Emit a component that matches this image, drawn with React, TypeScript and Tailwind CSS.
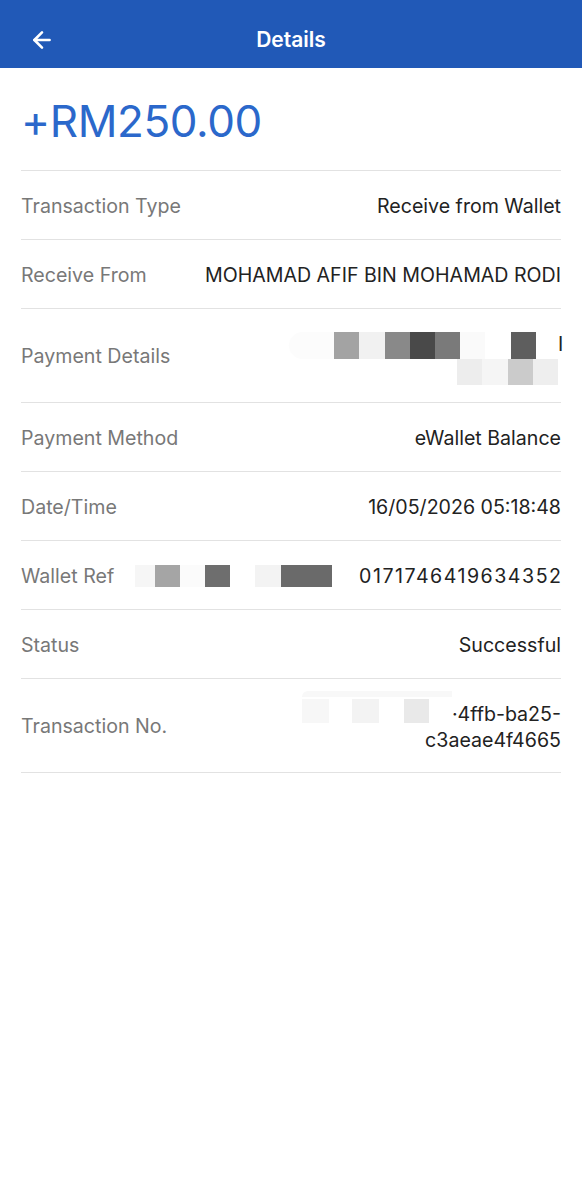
import { ArrowLeft } from 'lucide-react';

type Block = { w: number; c: string };

// pixelated (censored) strip drawn as plain blocks
function Pixels({ blocks, h }: { blocks: Block[]; h: number }) {
  return (
    <div className="flex" style={{ height: h }}>
      {blocks.map((b, i) => (
        <div key={i} style={{ width: b.w, backgroundColor: b.c }} />
      ))}
    </div>
  );
}

function Row({ label, children, tall }: { label: string; children: React.ReactNode; tall?: boolean }) {
  return (
    <div
      className={`flex items-center justify-between border-b border-[#e2e2e2] pt-[3px] ${tall ? 'h-[94px]' : 'h-[69px]'}`}
    >
      <span className="text-[19.6px] text-[#787878] whitespace-nowrap">{label}</span>
      <div className="text-[19.6px] text-[#222222] text-right whitespace-nowrap">{children}</div>
    </div>
  );
}

export default function App() {
  return (
    <div
      className="min-h-[1200px] w-[582px] bg-white"
      style={{ fontFamily: 'Inter, "Noto Sans", sans-serif' }}
    >
      {/* header */}
      <div className="relative flex h-[68px] items-center justify-center bg-[#2159b7] pt-[12px]">
        <ArrowLeft className="absolute left-[29px] top-[27px] h-[26px] w-[26px] text-white" strokeWidth={2.4} />
        <h1 className="text-[21px] font-semibold text-white">Details</h1>
      </div>

      <div className="px-[21px]">
        <div className="flex h-[103px] items-center border-b border-[#e2e2e2] pt-[4px]">
          <span className="text-[44px] leading-none text-[#2b68cb] tracking-[-0.4px]">+RM250.00</span>
        </div>

        <Row label="Transaction Type">Receive from Wallet</Row>
        <Row label="Receive From">MOHAMAD AFIF BIN MOHAMAD RODI</Row>
        <Row label="Payment Details" tall>
          <div className="flex flex-col items-end pt-[2px]">
            <div className="flex items-center">
              <div className="h-[27px] w-[45px] rounded-l-full bg-[#fcfcfc]" />
              <Pixels
                h={27}
                blocks={[
                  { w: 25, c: '#a3a3a3' },
                  { w: 26, c: '#f1f1f1' },
                  { w: 25, c: '#898989' },
                  { w: 25, c: '#494949' },
                  { w: 25, c: '#7a7a7a' },
                  { w: 25, c: '#fafafa' },
                  { w: 26, c: '#ffffff' },
                  { w: 25, c: '#5e5e5e' },
                  { w: 22, c: '#ffffff' },
                ]}
              />
              <span className="w-[3px] leading-none">I</span>
            </div>
            <Pixels
              h={26}
              blocks={[
                { w: 25, c: '#ededed' },
                { w: 26, c: '#f5f5f5' },
                { w: 25, c: '#cbcbcb' },
                { w: 25, c: '#eeeeee' },
                { w: 3, c: '#ffffff' },
              ]}
            />
          </div>
        </Row>
        <Row label="Payment Method">eWallet Balance</Row>
        <Row label="Date/Time">16/05/2026 05:18:48</Row>
        <Row label="Wallet Ref">
          <div className="flex items-center">
            <Pixels
              h={22}
              blocks={[
                { w: 20, c: '#f6f6f6' },
                { w: 25, c: '#a5a5a5' },
                { w: 25, c: '#fbfbfb' },
                { w: 25, c: '#6e6e6e' },
                { w: 25, c: '#ffffff' },
                { w: 26, c: '#f3f3f3' },
                { w: 51, c: '#6a6a6a' },
                { w: 27, c: '#ffffff' },
              ]}
            />
            <span className="tracking-[1.5px] -mr-[1.5px]">0171746419634352</span>
          </div>
        </Row>
        <Row label="Status">Successful</Row>
        <Row label="Transaction No." tall>
          <div className="flex flex-col items-end leading-[26px]">
            <div className="flex items-center">
              <div className="-mt-[14px] flex flex-col items-start">
                <div className="mb-[2px] h-[6px] w-[150px] rounded-tl-full bg-[#f8f8f8]" />
                <Pixels
                  h={24}
                  blocks={[
                    { w: 27, c: '#f7f7f7' },
                    { w: 23, c: '#ffffff' },
                    { w: 27, c: '#f3f3f3' },
                    { w: 25, c: '#ffffff' },
                    { w: 25, c: '#e9e9e9' },
                    { w: 18, c: '#ffffff' },
                  ]}
                />
              </div>
              <span>·4ffb-ba25-</span>
            </div>
            <span>c3aeae4f4665</span>
          </div>
        </Row>
      </div>
    </div>
  );
}
